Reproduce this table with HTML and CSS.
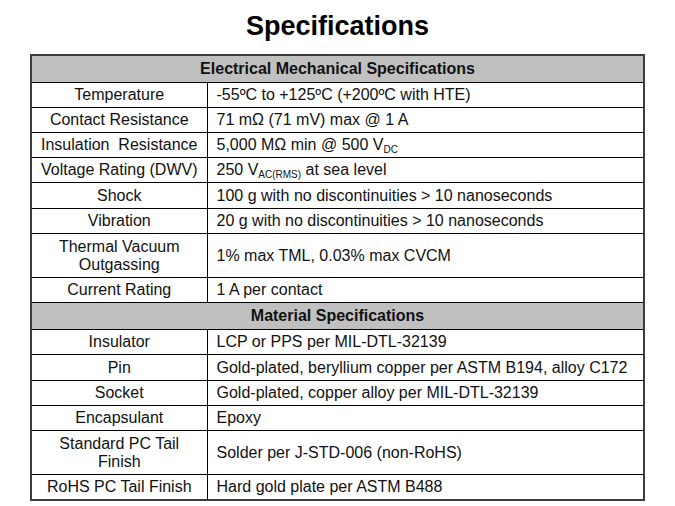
FILE: index.html
```html
<!DOCTYPE html>
<html>
<head>
<meta charset="utf-8">
<link rel="stylesheet" href="styles.css">
</head>
<body>
<div class="slide">
  <h1 class="title">Specifications</h1>
  <table class="spec">
    <colgroup><col class="c1"><col class="c2"></colgroup>
    <tr class="sect"><td colspan="2">Electrical Mechanical Specifications</td></tr>
    <tr><td class="k">Temperature</td><td class="v">-55ºC to +125ºC (+200ºC with HTE)</td></tr>
    <tr><td class="k">Contact Resistance</td><td class="v">71 mΩ (71 mV) max @ 1 A</td></tr>
    <tr><td class="k">Insulation&nbsp; Resistance</td><td class="v">5,000 MΩ min @ 500 V<sub>DC</sub></td></tr>
    <tr><td class="k">Voltage Rating (DWV)</td><td class="v">250 V<sub>AC(RMS)</sub> at sea level</td></tr>
    <tr class="r26"><td class="k">Shock</td><td class="v">100 g with no discontinuities &gt; 10 nanoseconds</td></tr>
    <tr><td class="k">Vibration</td><td class="v">20 g with no discontinuities &gt; 10 nanoseconds</td></tr>
    <tr class="tall"><td class="k">Thermal Vacuum<br>Outgassing</td><td class="v">1% max TML, 0.03% max CVCM</td></tr>
    <tr><td class="k">Current Rating</td><td class="v">1 A per contact</td></tr>
    <tr class="sect"><td colspan="2">Material Specifications</td></tr>
    <tr><td class="k">Insulator</td><td class="v">LCP or PPS per MIL-DTL-32139</td></tr>
    <tr class="r26"><td class="k">Pin</td><td class="v">Gold-plated, beryllium copper per ASTM B194, alloy C172</td></tr>
    <tr><td class="k">Socket</td><td class="v">Gold-plated, copper alloy per MIL-DTL-32139</td></tr>
    <tr><td class="k">Encapsulant</td><td class="v">Epoxy</td></tr>
    <tr class="tall"><td class="k">Standard PC Tail<br>Finish</td><td class="v">Solder per J-STD-006 (non-RoHS)</td></tr>
    <tr><td class="k">RoHS PC Tail Finish</td><td class="v">Hard gold plate per ASTM B488</td></tr>
  </table>
</div>
</body>
</html>
```

FILE: styles.css
```css
html, body {
  margin: 0;
  padding: 0;
  background: #fff;
}
.slide {
  width: 675px;
  height: 506px;
  font-family: "Liberation Sans", Arial, sans-serif;
  color: #000;
  display: flex;
  flex-direction: column;
  align-items: center;
}
.title {
  margin: 11px 0 12px;
  font-size: 27px;
  line-height: 31px;
  font-weight: bold;
  text-align: center;
}
.spec {
  border-collapse: collapse;
  border: 2px solid #3c3c3c;
  width: 615px;
  font-size: 16px;
  line-height: 18px;
  color: #111;
}
.c1 { width: 176px; }
.spec td {
  border: 1px solid #000;
  padding: 0;
  height: 24px;
  vertical-align: middle;
}
.spec tr.r26 td { height: 25px; }
.spec tr.tall td { height: 43px; }
.spec tr.sect td {
  background: #c0c0c0;
  font-weight: bold;
  text-align: center;
  height: 26px;
}
.k {
  text-align: center;
}
.v {
  padding-left: 9px !important;
}
sub {
  font-size: 10px;
  line-height: 0;
  vertical-align: -3px;
}
```
